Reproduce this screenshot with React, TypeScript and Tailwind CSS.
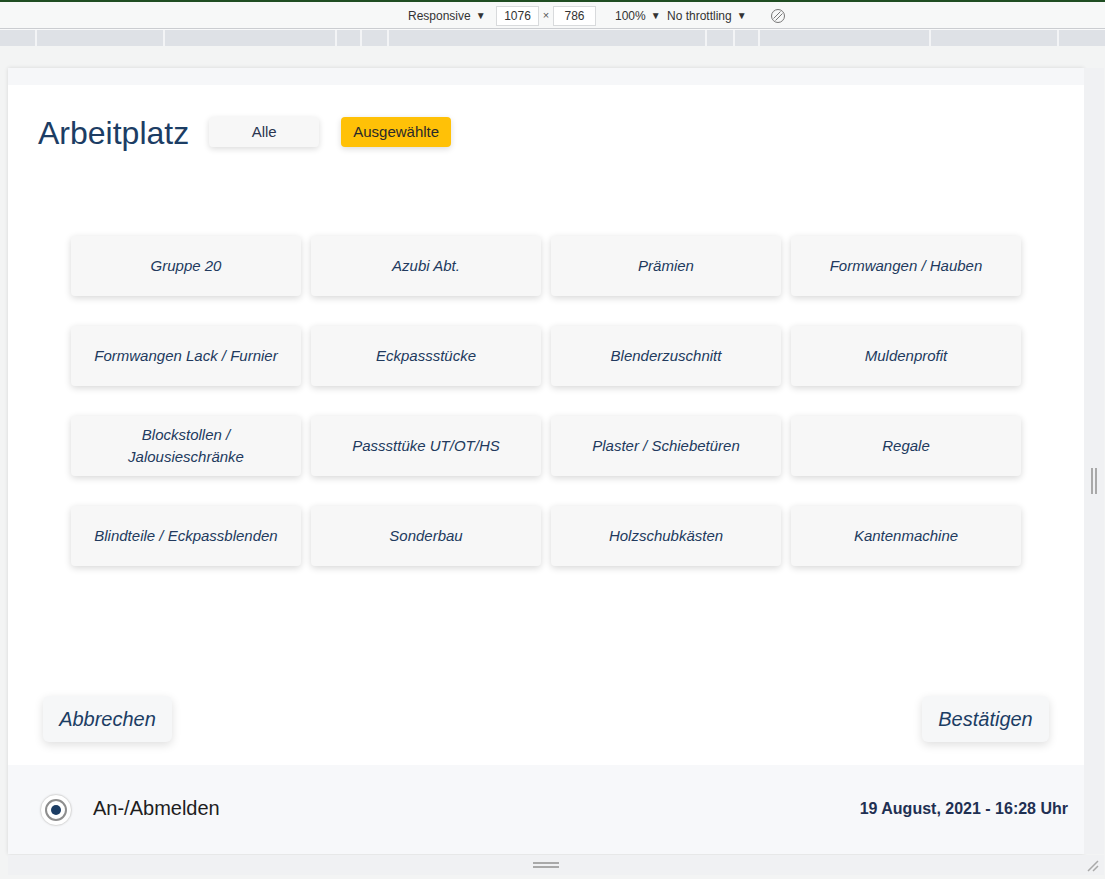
import { ChevronDown } from 'lucide-react'

const GRUPPEN = [
  'Gruppe 20',
  'Azubi Abt.',
  'Prämien',
  'Formwangen / Hauben',
  'Formwangen Lack / Furnier',
  'Eckpassstücke',
  'Blenderzuschnitt',
  'Muldenprofit',
  'Blockstollen / Jalousieschränke',
  'Passsttüke UT/OT/HS',
  'Plaster / Schiebetüren',
  'Regale',
  'Blindteile / Eckpassblenden',
  'Sonderbau',
  'Holzschubkästen',
  'Kantenmachine',
]

// segments of the media-query bar, as drawn by devtools
const MEDIA_SEGMENTS = [
  'w-[128px]',
  'w-[172px]',
  'w-[25px]',
  'w-[27px]',
  'w-[318px]',
  'w-[28px]',
  'w-[25px]',
  'w-[171px]',
  'w-[128px]',
  'flex-1',
]

function Caret() {
  return <span className="ml-[5px] text-[10px] leading-none text-[#333]">▼</span>
}

function DevToolbar() {
  return (
    <>
      <div className="h-[2px] bg-[#1f4d22]" />
      <div className="flex h-[26px] items-center bg-[#f7f8f8] pl-[408px] pt-px text-[12px] text-[#333]">
        <div className="flex w-[88px] items-center">
          Responsive
          <Caret />
        </div>
        <div className="flex h-[20px] w-[43px] items-center justify-center border border-[#d8dadc] bg-white">
          1076
        </div>
        <div className="flex w-[14px] justify-center text-[11px] text-[#555]">×</div>
        <div className="flex h-[20px] w-[43px] items-center justify-center border border-[#d8dadc] bg-white">
          786
        </div>
        <div className="ml-[19px] flex w-[52px] items-center">
          100%
          <Caret />
        </div>
        <div className="flex w-[103px] items-center">
          No throttling
          <Caret />
        </div>
        <svg width="16" height="16" viewBox="0 0 16 16" className="text-[#777]">
          <circle cx="8" cy="8" r="6.5" fill="none" stroke="currentColor" strokeWidth="1" />
          <path d="M3.5 10.5 L10.5 3.5 M5.5 12.5 L12.5 5.5" stroke="currentColor" strokeWidth="1" fill="none" />
        </svg>
      </div>
      <div className="h-px bg-[#cbcdd1]" />
      <div className="h-px bg-[#f8f9fa]" />
      <div className="flex h-[16px] bg-[#dee1e6]">
        <div className="w-[35px]" />
        {MEDIA_SEGMENTS.map((w, i) => (
          <div key={i} className={`${w} border-l-2 border-[#f3f4f6]`} />
        ))}
      </div>
      <div className="h-px bg-[#f3f4f4]" />
      <div className="h-[21px] bg-[#f3f4f4]" />
    </>
  )
}

function Gruppe({ name }: { name: string }) {
  return (
    <button className="flex h-[60px] items-center justify-center rounded-[4px] bg-[#f7f7f7] px-[14px] text-center text-[15px] italic leading-[22px] text-[#223a5e] shadow-[0_2px_7px_rgba(0,0,0,0.16)]">
      {name}
    </button>
  )
}

function Viewport() {
  return (
    <div className="flex h-[786px] w-[1076px] flex-col bg-white shadow-[0_0_4px_rgba(0,0,0,0.12)]">
      <div className="h-[17px] bg-[#f6f7f9]" />

      <div className="flex flex-1 flex-col">
        <div className="flex items-start px-[30px] pt-[30px]">
          <h1 className="text-[32px] leading-[37px] text-[#1c3d64]">Arbeitplatz</h1>
          <button className="ml-[20px] mt-[2px] h-[30px] w-[110px] rounded-[4px] bg-[#f7f7f7] pt-px text-[15px] text-[#2b3550] shadow-[0_2px_6px_rgba(0,0,0,0.14)]">
            Alle
          </button>
          <button className="ml-[22px] mt-[2px] h-[30px] w-[110px] rounded-[4px] bg-[#ffc107] pt-px text-[15px] text-[#2a2a2a] shadow-[0_2px_6px_rgba(0,0,0,0.14)]">
            Ausgewählte
          </button>
        </div>

        <div className="mx-auto mt-[84px] grid w-[950px] grid-cols-4 gap-x-[10px] gap-y-[30px]">
          {GRUPPEN.map((g) => (
            <Gruppe key={g} name={g} />
          ))}
        </div>

        <div className="flex-1" />

        <div className="flex items-center justify-between px-[35px] pb-[23px]">
          <button className="h-[46px] w-[129px] rounded-[6px] bg-[#f6f7f8] text-[20px] italic text-[#1c3d64] shadow-[0_3px_10px_rgba(0,0,0,0.13)]">
            Abbrechen
          </button>
          <button className="h-[46px] w-[127px] rounded-[6px] bg-[#f6f7f8] text-[20px] italic text-[#1c3d64] shadow-[0_3px_10px_rgba(0,0,0,0.13)]">
            Bestätigen
          </button>
        </div>
      </div>

      <div className="flex h-[89px] items-center justify-between bg-[#f7f8fa] pl-[32px] pr-[16px]">
        <div className="flex items-center">
          <div className="flex h-[32px] w-[32px] items-center justify-center rounded-full border border-[#dcdcdc] bg-white shadow-[0_0_2px_rgba(0,0,0,0.1)]">
            <div className="flex h-[22px] w-[22px] items-center justify-center rounded-full border-2 border-[#8e8e8e]">
              <div className="h-[10px] w-[10px] rounded-full bg-[#1c3d64]" />
            </div>
          </div>
          <span className="mb-[3px] ml-[21px] text-[20px] text-[#1e1e1e]">An-/Abmelden</span>
        </div>
        <span className="mb-px text-[16px] font-bold text-[#1f3052]">19 August, 2021 - 16:28 Uhr</span>
      </div>
    </div>
  )
}

export default function App() {
  return (
    <div
      className="flex h-[879px] w-[1105px] flex-col overflow-hidden bg-[#f3f4f4]"
      style={{ fontFamily: '"Liberation Sans", Arial, sans-serif' }}
    >
      <DevToolbar />

      <div className="flex">
        <div className="w-[8px]" />
        <Viewport />
        <div className="flex h-[786px] w-[20px] items-center justify-center gap-[2px] bg-[#f0f1f3] pt-[40px]">
          <div className="h-[26px] w-[2px] bg-[#a9a9a9]" />
          <div className="h-[26px] w-[2px] bg-[#a9a9a9]" />
        </div>
      </div>

      <div className="mt-px flex">
        <div className="w-[8px]" />
        <div className="relative flex h-[20px] w-[1096px] flex-col items-center justify-center gap-[2px] bg-[#f0f1f3] pr-[20px]">
          <div className="h-[2px] w-[26px] bg-[#a9a9a9]" />
          <div className="h-[2px] w-[26px] bg-[#a9a9a9]" />
          <svg width="14" height="14" viewBox="0 0 14 14" className="absolute bottom-[2px] right-[4px] text-[#aaa]">
            <path d="M2 12 L12 2 M7 12 L12 7" stroke="currentColor" strokeWidth="1.5" fill="none" />
          </svg>
        </div>
      </div>
    </div>
  )
}
